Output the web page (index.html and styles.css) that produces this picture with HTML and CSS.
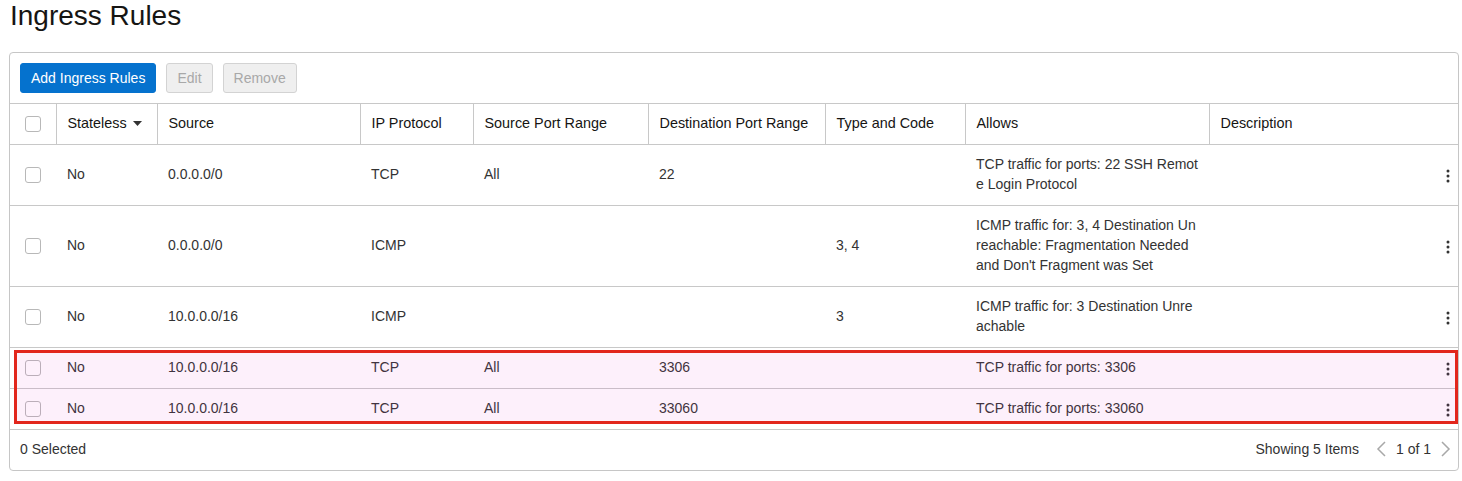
FILE: index.html
```html
<!DOCTYPE html>
<html lang="en">
<head>
<meta charset="utf-8">
<title>Ingress Rules</title>
<link rel="stylesheet" href="styles.css">
</head>
<body>
<div class="page">
  <h1 class="title">Ingress Rules</h1>
  <div class="card">
    <div class="toolbar">
      <button class="btn btn-primary">Add Ingress Rules</button>
      <button class="btn" disabled>Edit</button>
      <button class="btn" disabled>Remove</button>
    </div>
    <table class="rules">
      <colgroup>
        <col class="c-cb"><col class="c-stateless"><col class="c-source"><col class="c-proto"><col class="c-sport"><col class="c-dport"><col class="c-type"><col class="c-allows"><col>
      </colgroup>
      <thead>
        <tr>
          <th class="cb-cell"><span class="cb"></span></th>
          <th><span class="sortable">Stateless <svg class="caret" width="9" height="5" viewBox="0 0 9 5"><polygon points="0,0 9,0 4.5,5" fill="#333"/></svg></span></th>
          <th>Source</th>
          <th>IP Protocol</th>
          <th>Source Port Range</th>
          <th>Destination Port Range</th>
          <th>Type and Code</th>
          <th>Allows</th>
          <th>Description</th>
        </tr>
      </thead>
      <tbody>
        <tr>
          <td class="cb-cell"><span class="cb"></span></td>
          <td>No</td><td>0.0.0.0/0</td><td>TCP</td><td>All</td><td>22</td><td></td>
          <td class="allows">TCP traffic for ports: 22 SSH Remote Login Protocol</td>
          <td class="desc"><svg class="kebab" width="4" height="14" viewBox="0 0 4 14"><circle cx="2" cy="2" r="1.5"/><circle cx="2" cy="7" r="1.5"/><circle cx="2" cy="12" r="1.5"/></svg></td>
        </tr>
        <tr>
          <td class="cb-cell"><span class="cb"></span></td>
          <td>No</td><td>0.0.0.0/0</td><td>ICMP</td><td></td><td></td><td>3, 4</td>
          <td class="allows">ICMP traffic for: 3, 4 Destination Unreachable: Fragmentation Needed and Don't Fragment was Set</td>
          <td class="desc"><svg class="kebab" width="4" height="14" viewBox="0 0 4 14"><circle cx="2" cy="2" r="1.5"/><circle cx="2" cy="7" r="1.5"/><circle cx="2" cy="12" r="1.5"/></svg></td>
        </tr>
        <tr>
          <td class="cb-cell"><span class="cb"></span></td>
          <td>No</td><td>10.0.0.0/16</td><td>ICMP</td><td></td><td></td><td>3</td>
          <td class="allows">ICMP traffic for: 3 Destination Unreachable</td>
          <td class="desc"><svg class="kebab" width="4" height="14" viewBox="0 0 4 14"><circle cx="2" cy="2" r="1.5"/><circle cx="2" cy="7" r="1.5"/><circle cx="2" cy="12" r="1.5"/></svg></td>
        </tr>
        <tr>
          <td class="cb-cell"><span class="cb"></span></td>
          <td>No</td><td>10.0.0.0/16</td><td>TCP</td><td>All</td><td>3306</td><td></td>
          <td class="allows">TCP traffic for ports: 3306</td>
          <td class="desc"><svg class="kebab" width="4" height="14" viewBox="0 0 4 14"><circle cx="2" cy="2" r="1.5"/><circle cx="2" cy="7" r="1.5"/><circle cx="2" cy="12" r="1.5"/></svg></td>
        </tr>
        <tr>
          <td class="cb-cell"><span class="cb"></span></td>
          <td>No</td><td>10.0.0.0/16</td><td>TCP</td><td>All</td><td>33060</td><td></td>
          <td class="allows">TCP traffic for ports: 33060</td>
          <td class="desc"><svg class="kebab" width="4" height="14" viewBox="0 0 4 14"><circle cx="2" cy="2" r="1.5"/><circle cx="2" cy="7" r="1.5"/><circle cx="2" cy="12" r="1.5"/></svg></td>
        </tr>
      </tbody>
    </table>
    <div class="footer">
      <span>0 Selected</span>
      <div class="pager">
        <span class="count">Showing 5 Items</span>
        <svg class="chev" width="10" height="16" viewBox="0 0 10 16"><path d="M9 1 L2 8 L9 15"/></svg>
        <span class="pages">1 of 1</span>
        <svg class="chev" width="10" height="16" viewBox="0 0 10 16"><path d="M1 1 L8 8 L1 15"/></svg>
      </div>
    </div>
    <div class="highlight"></div>
  </div>
</div>
</body>
</html>
```

FILE: styles.css
```css
* { box-sizing: border-box; }

html, body {
  margin: 0;
  background: #fff;
}

body {
  font-family: "Liberation Sans", Arial, sans-serif;
  font-size: 14px;
  color: #333;
}

.page {
  padding: 0 3px 0 9px;
}

.title {
  margin: 0 0 20px 1px;
  font-size: 28px;
  line-height: 32px;
  font-weight: normal;
  color: #161513;
}

.card {
  position: relative;
  border: 1px solid #c6c6c6;
  border-radius: 4px;
  background: #fff;
}

.toolbar {
  display: flex;
  gap: 10px;
  padding: 10px;
  border-bottom: 1px solid #c8c8c8;
}

.btn {
  height: 30px;
  padding: 0 10px;
  font-family: inherit;
  font-size: 14px;
  border-radius: 3px;
  border: 1px solid #d3d3d3;
  background: #efefef;
  color: #a8a8a8;
}

.btn-primary {
  background: #0572ce;
  border-color: #0572ce;
  color: #fff;
}

.rules {
  width: 100%;
  table-layout: fixed;
  border-collapse: collapse;
}

.c-cb { width: 46px; }
.c-stateless { width: 101px; }
.c-source { width: 203px; }
.c-proto { width: 113px; }
.c-sport { width: 175px; }
.c-dport { width: 177px; }
.c-type { width: 140px; }
.c-allows { width: 244px; }

.rules th,
.rules td {
  padding: 9px 9px 11px 11px;
  line-height: 20px;
  text-align: left;
  vertical-align: middle;
  border-bottom: 1px solid #c8c8c8;
}

.rules th {
  font-size: 14.4px;
  font-weight: normal;
  color: #161513;
  border-right: 1px solid #c8c8c8;
}

.rules th:last-child { border-right: none; }

.rules td { color: #333; }

.rules .cb-cell {
  padding: 10px 0 10px 15px;
}

.cb {
  display: block;
  width: 16px;
  height: 16px;
  border: 1px solid #b8b8b8;
  border-radius: 3px;
  background: #fff;
}

.sortable {
  display: inline-flex;
  align-items: center;
  gap: 6px;
}

.allows {
  word-break: break-all;
}

.rules .desc {
  text-align: right;
  padding: 10px 8px 10px 10px;
}

.kebab {
  display: inline-block;
  vertical-align: middle;
  fill: #333;
}

.footer {
  display: flex;
  justify-content: space-between;
  align-items: center;
  padding: 9px 7px 11px 10px;
  line-height: 20px;
}

.pager {
  display: flex;
  align-items: center;
}

.count { margin-right: 17px; }
.pages { margin: 0 10px; }

.chev {
  display: block;
  fill: none;
  stroke: #a8a8a8;
  stroke-width: 1.5;
}

.highlight {
  position: absolute;
  top: 297px;
  left: 4px;
  width: 1444px;
  height: 74px;
  border: 3px solid #e2261c;
  background: rgba(230, 60, 200, 0.08);
  pointer-events: none;
}
```
